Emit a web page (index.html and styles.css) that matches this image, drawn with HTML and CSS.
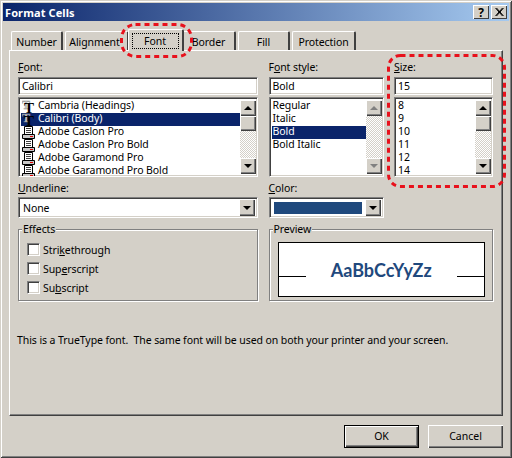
FILE: index.html
```html
<!DOCTYPE html>
<html lang="en">
<head>
    <meta charset="UTF-8">
    <meta name="viewport" content="width=device-width, initial-scale=1.0">
    <title>Format Cells</title>
    <link rel="stylesheet" href="styles.css">
</head>
<body>
    <svg class="defs" width="0" height="0">
        <symbol id="icon-tt" viewBox="0 0 16 13">
            <text x="0" y="9" class="tt-back">T</text>
            <text x="2" y="13" class="tt-front">T</text>
        </symbol>
        <symbol id="icon-printer" viewBox="0 0 16 13">
            <path d="M2.500 .5h8v8h-8z" fill="#fff" stroke="#000"/>
            <path d="M4 2.500h5M4 4.500h5M4 6.500h5" stroke="#404040"/>
            <path d="M.5 8.500h12v4h-12z" fill="#c8c8c8" stroke="#000"/>
            <path d="M8 10.500h3" stroke="#e00000"/>
        </symbol>
    </svg>

    <div class="window">
        <div class="titlebar">
            <span class="title">Format Cells</span>
            <div class="title-buttons">
                <span class="title-btn">?</span>
                <span class="title-btn title-close">
                    <svg width="9" height="8" viewBox="0 0 9 8"><path d="M.5 0l7 8M8.500 0l-7 8M1.500 0l7 8M7.500 0l-7 8" stroke="#000" stroke-width="1" fill="none"/></svg>
                </span>
            </div>
        </div>

        <div class="tabs">
            <span class="tab tab-number">Number</span>
            <span class="tab tab-alignment">Alignment</span>
            <span class="tab tab-font active"><span class="focus">Font</span></span>
            <span class="tab tab-border">Border</span>
            <span class="tab tab-fill">Fill</span>
            <span class="tab tab-protection">Protection</span>
        </div>

        <div class="panel">
            <div class="fields">
                <div class="field">
                    <label class="label"><u>F</u>ont:</label>
                    <div class="input">Calibri</div>
                    <div class="list">
                        <div class="rows">
                            <div class="row"><svg class="font-icon"><use href="#icon-tt"/></svg><span>Cambria (Headings)</span></div>
                            <div class="row selected"><svg class="font-icon"><use href="#icon-tt"/></svg><span>Calibri (Body)</span></div>
                            <div class="row"><svg class="font-icon"><use href="#icon-printer"/></svg><span>Adobe Caslon Pro</span></div>
                            <div class="row"><svg class="font-icon"><use href="#icon-printer"/></svg><span>Adobe Caslon Pro Bold</span></div>
                            <div class="row"><svg class="font-icon"><use href="#icon-printer"/></svg><span>Adobe Garamond Pro</span></div>
                            <div class="row"><svg class="font-icon"><use href="#icon-printer"/></svg><span>Adobe Garamond Pro Bold</span></div>
                        </div>
                        <div class="scrollbar">
                            <span class="sb-btn"><i class="arrow-up"></i></span>
                            <span class="sb-thumb"></span>
                            <span class="sb-track"></span>
                            <span class="sb-btn"><i class="arrow-down"></i></span>
                        </div>
                    </div>
                </div>

                <div class="field">
                    <label class="label">F<u>o</u>nt style:</label>
                    <div class="input">Bold</div>
                    <div class="list">
                        <div class="rows plain">
                            <div class="row">Regular</div>
                            <div class="row">Italic</div>
                            <div class="row selected">Bold</div>
                            <div class="row">Bold Italic</div>
                        </div>
                        <div class="scrollbar disabled">
                            <span class="sb-btn"><i class="arrow-up"></i></span>
                            <span class="sb-track"></span>
                            <span class="sb-btn"><i class="arrow-down"></i></span>
                        </div>
                    </div>
                </div>

                <div class="field">
                    <label class="label"><u>S</u>ize:</label>
                    <div class="input">15</div>
                    <div class="list">
                        <div class="rows plain">
                            <div class="row">8</div>
                            <div class="row">9</div>
                            <div class="row">10</div>
                            <div class="row">11</div>
                            <div class="row">12</div>
                            <div class="row">14</div>
                        </div>
                        <div class="scrollbar">
                            <span class="sb-btn"><i class="arrow-up"></i></span>
                            <span class="sb-thumb"></span>
                            <span class="sb-track"></span>
                            <span class="sb-btn"><i class="arrow-down"></i></span>
                        </div>
                    </div>
                </div>

                <div class="field field-lower">
                    <label class="label"><u>U</u>nderline:</label>
                    <div class="select">
                        <span class="select-value">None</span>
                        <span class="sb-btn"><i class="arrow-down"></i></span>
                    </div>
                </div>

                <div class="field field-lower">
                    <label class="label"><u>C</u>olor:</label>
                    <div class="select">
                        <span class="swatch"></span>
                        <span class="sb-btn"><i class="arrow-down"></i></span>
                    </div>
                </div>

                <fieldset class="group group-effects">
                    <legend>Effects</legend>
                    <label class="check"><input type="checkbox"><span>Stri<u>k</u>ethrough</span></label>
                    <label class="check"><input type="checkbox"><span>Sup<u>e</u>rscript</span></label>
                    <label class="check"><input type="checkbox"><span>Su<u>b</u>script</span></label>
                </fieldset>

                <fieldset class="group group-preview">
                    <legend>Preview</legend>
                    <div class="preview-box">
                        <span class="preview-line"></span>
                        <span class="preview-text">AaBbCcYyZz</span>
                        <span class="preview-line"></span>
                    </div>
                </fieldset>
            </div>

            <p class="note">This is a TrueType font.&nbsp; The same font will be used on both your printer and your screen.</p>
        </div>

        <div class="footer">
            <button class="btn btn-default">OK</button>
            <button class="btn">Cancel</button>
        </div>

        <!-- red marks drawn over the dialog -->
        <svg class="marks" width="512" height="458" viewBox="0 0 512 458">
            <rect x="121.500" y="24.500" width="70" height="32" rx="14" class="mark"/>
            <rect x="388.500" y="55.500" width="116" height="131" rx="12" class="mark"/>
        </svg>
    </div>
</body>
</html>
```

FILE: styles.css
```css
* {
    box-sizing: border-box;
}
body {
    margin: 0;
    font-family: "Noto Sans", sans-serif;
    font-size: 10.5px;
    letter-spacing: -0.08px;
    line-height: 13px;
    color: #000;
}
.defs {
    position: absolute;
}
.window {
    position: relative;
    width: 512px;
    height: 458px;
    padding: 3px;
    background-color: #d4d0c8;
    box-shadow: inset 1px 1px #d4d0c8, inset -1px -1px #404040, inset 2px 2px #fff, inset -2px -2px #808080;
    overflow: hidden;
}

/* title bar */
.titlebar {
    display: flex;
    align-items: center;
    justify-content: space-between;
    height: 18px;
    padding: 0 2px;
    background: linear-gradient(to right, #0a246a, #a6caf0);
}
.title {
    color: #fff;
    font-size: 11px;
    font-weight: bold;
    letter-spacing: .1px;
}
.title-buttons {
    display: flex;
    gap: 2px;
}
.title-btn {
    display: flex;
    align-items: center;
    justify-content: center;
    width: 16px;
    height: 14px;
    background-color: #d4d0c8;
    font-weight: bold;
    font-size: 12px;
    box-shadow: inset 1px 1px #fff, inset -1px -1px #404040;
}

/* tabs */
.tabs {
    display: flex;
    align-items: flex-end;
    height: 21px;
    margin: 8px 0 0 8px;
}
.tab {
    display: flex;
    align-items: center;
    justify-content: center;
    height: 19px;
    margin-right: 2px;
    padding-top: 2px;
    border: 1px solid #fff;
    border-right: 2px solid #404040;
    border-bottom: none;
    border-radius: 2px 2px 0 0;
}
.tab-number { width: 52px; }
.tab-alignment { width: 64px; margin-right: -1px; padding-right: 4px; }
.tab-font { width: 56px; margin-right: -2px; }
.tab-border { width: 54px; }
.tab-fill { width: 52px; }
.tab-protection { width: 64px; }
.tab.active {
    position: relative;
    z-index: 1;
    height: 22px;
    margin-bottom: -1px;
    padding-top: 0;
    background-color: #d4d0c8;
}
.focus {
    display: block;
    width: 47px;
    height: 16px;
    margin-right: 1px;
    line-height: 14px;
    text-align: center;
    border: 1px dotted #000;
}

/* main panel */
.panel {
    height: 366px;
    margin: 0 6px;
    padding: 9px 9px 0 8px;
    border: 1px solid #fff;
    border-right-color: #404040;
    border-bottom-color: #404040;
    box-shadow: inset -1px -1px #808080;
}
.fields {
    display: grid;
    grid-template-columns: 240px 115px 99px;
    column-gap: 10.5px;
}
.field {
    display: flex;
    flex-direction: column;
}
.field-lower {
    margin-top: 5px;
}
.label {
    display: block;
    height: 14px;
    padding-top: 1px;
}
.field-lower .label {
    height: 13px;
    padding-top: 0;
}
.input, .list, .select {
    background-color: #fff;
    border: 1px solid;
    border-color: #808080 #fff #fff #808080;
    box-shadow: inset 1px 1px #404040, inset -1px -1px #d4d0c8;
}
.input {
    height: 18px;
    margin-top: 3px;
    padding: 2px 3px;
}
.list {
    display: flex;
    height: 80px;
    margin-top: 2px;
    padding: 2px 0 2px 2px;
    overflow: hidden;
}
.rows {
    flex: 1;
    min-width: 0;
}
.row {
    display: flex;
    align-items: center;
    height: 13px;
    padding-bottom: 2px;
    white-space: nowrap;
}
.rows.plain .row {
    padding-left: 1px;
}
.row.selected {
    background-color: #0a246a;
    color: #fff;
}
.font-icon {
    width: 16px;
    height: 13px;
    margin: 2px 0 0 1px;
    flex: none;
    overflow: visible;
}
.tt-back {
    font: bold 12px "Liberation Serif", serif;
    fill: #c8c8c8;
    stroke: #808080;
    stroke-width: .3;
}
.tt-front {
    font: bold 15px "Liberation Serif", serif;
    fill: #000;
}

/* scrollbars */
.scrollbar {
    display: flex;
    flex-direction: column;
    flex: none;
    width: 16px;
    margin-right: 1px;
}
.sb-btn, .sb-thumb {
    display: flex;
    align-items: center;
    justify-content: center;
    flex: none;
    width: 16px;
    height: 16px;
    background-color: #d4d0c8;
    box-shadow: inset 1px 1px #fff, inset -1px -1px #404040, inset -2px -2px #808080;
}
.sb-thumb {
    height: 15px;
}
.sb-track {
    flex: 1;
    background-color: #fff;
    background-image: conic-gradient(#d4d0c8 25%, #fff 0 50%, #d4d0c8 0 75%, #fff 0);
    background-size: 2px 2px;
}
.arrow-up, .arrow-down {
    width: 0;
    height: 0;
    border-left: 4px solid transparent;
    border-right: 4px solid transparent;
}
.arrow-up {
    border-bottom: 4px solid #000;
}
.arrow-down {
    border-top: 4px solid #000;
}
.disabled .arrow-up {
    border-bottom-color: #808080;
}
.disabled .arrow-down {
    border-top-color: #808080;
}

/* drop downs */
.select {
    display: flex;
    align-items: center;
    height: 21px;
    margin-top: 2px;
    padding: 2px 2px 2px 4px;
}
.select-value {
    flex: 1;
    padding-top: 2px;
}
.select .sb-btn {
    height: 17px;
}
.swatch {
    flex: 1;
    height: 12px;
    margin: 0 3px 0 0;
    background-color: #1f497d;
}

/* effects and preview */
.group {
    height: 78px;
    margin: 5px 0 0;
    padding: 7px 7px 0 8px;
    min-width: 0;
    border: 1px solid #808080;
    box-shadow: inset 1px 1px #fff, 1px 1px #fff;
}
.group legend {
    margin-left: -5px;
    padding: 0 1px;
    background-color: #d4d0c8;
}
.group-effects {
    grid-column: 1;
    display: flex;
    flex-direction: column;
    gap: 6px;
}
.group-preview {
    grid-column: 2 / 4;
}
.check {
    display: flex;
    align-items: center;
    gap: 3px;
    height: 13px;
}
.check span {
    padding-top: 2px;
}
.check input {
    appearance: none;
    width: 13px;
    height: 13px;
    margin: 0;
    background-color: #fff;
    border: 1px solid;
    border-color: #808080 #fff #fff #808080;
    box-shadow: inset 1px 1px #404040, inset -1px -1px #d4d0c8;
}
.preview-box {
    display: flex;
    align-items: center;
    justify-content: center;
    gap: 25px;
    height: 55px;
    margin-top: -1px;
    background-color: #fff;
    border: 1px solid #000;
}
.preview-line {
    flex: 1;
    height: 1px;
    margin-top: 13px;
    background-color: #000;
}
.preview-text {
    font-family: Lato, sans-serif;
    font-size: 18px;
    font-weight: bold;
    letter-spacing: 0;
    line-height: 24px;
    color: #1f497d;
}
.note {
    margin: 33px 0 0 -1px;
}

/* buttons */
.footer {
    display: flex;
    justify-content: flex-end;
    gap: 9px;
    padding: 9px 6px 0 0;
}
.btn {
    width: 75px;
    height: 23px;
    padding: 0;
    background-color: #d4d0c8;
    border: none;
    color: #000;
    font: inherit;
    box-shadow: inset 1px 1px #fff, inset -1px -1px #404040, inset -2px -2px #808080;
}
.btn-default {
    border: 1px solid #000;
}

/* red annotation marks */
.marks {
    position: absolute;
    left: 0;
    top: 0;
}
.mark {
    fill: none;
    stroke: #e8111c;
    stroke-width: 3;
    stroke-dasharray: 5 4;
}
```
